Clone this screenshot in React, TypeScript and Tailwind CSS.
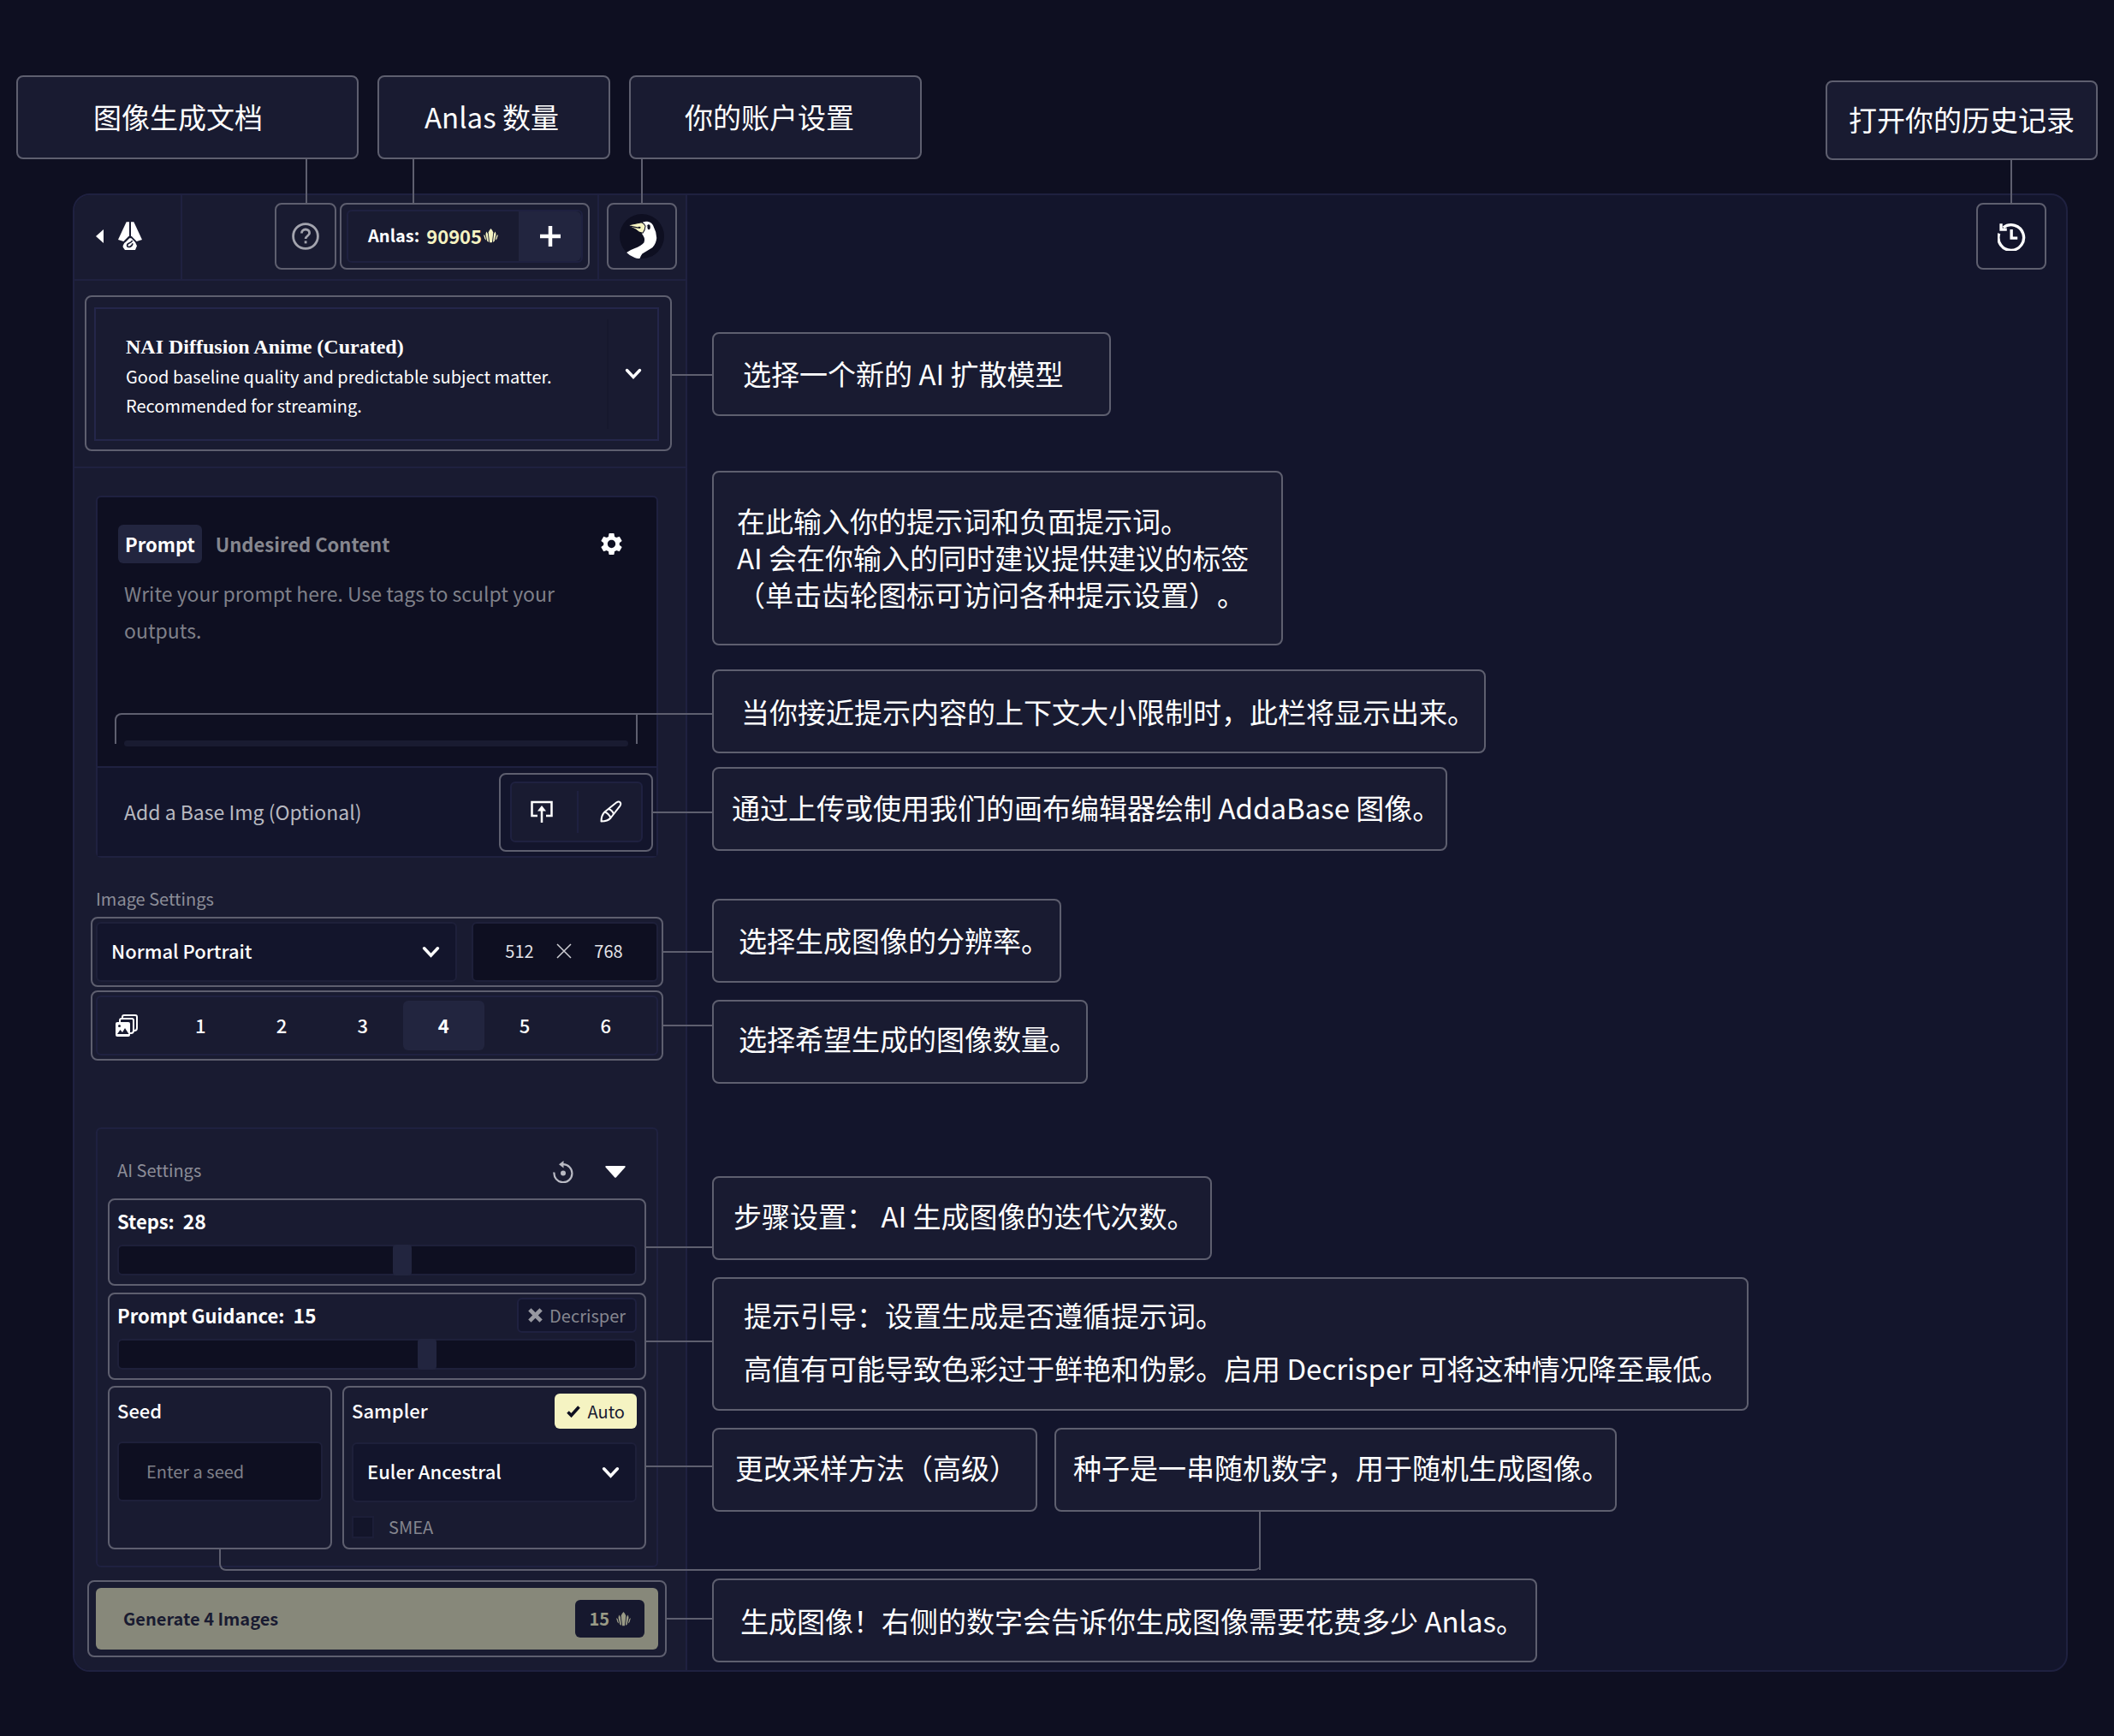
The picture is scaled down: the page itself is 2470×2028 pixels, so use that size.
import React from "react";
import { ReactNode } from "react";

/* ---------- icons ---------- */

const AnlasIcon = ({ className }: { className: string }) => (
  <svg viewBox="0 0 48 48" fill="currentColor" className={className} aria-hidden="true">
    <path d="M24 0q6 6 8 13l-4 33h-8l-4-33q2-7 8-13z" />
    <path d="M9 10l5 7 3 28-5-4-5-22z" />
    <path d="M39 10l-5 7-3 28 5-4 5-22z" />
    <path d="M0 20l5 4 4 15-5-5z" />
    <path d="M48 20l-5 4-4 15 5-5z" />
  </svg>
);

const PenNibLogo = () => (
  <svg viewBox="0 0 84 102" fill="#fff" className="h-[34px] w-[28px]" aria-hidden="true">
    <path d="M29 1h10v48L19 69 0 63z" />
    <path d="M45 1h10l29 62-19 6-20-20z" />
    <path d="M17 84q2-9 11-14l12-12h6l14 14 6 13-6 14H24l-7-10z" />
    <path d="M50 66q-3 6-11 9t-7 9 9 4 10-12" fill="none" stroke="#191b31" strokeWidth="5" />
  </svg>
);

const Chevron = ({ className }: { className: string }) => (
  <svg viewBox="0 0 20 14" fill="none" stroke="#fff" strokeWidth="3.4" className={className} aria-hidden="true">
    <path d="M2.5 2.5L10 10.5l7.5-8" strokeLinecap="round" />
  </svg>
);

const HelpIcon = () => (
  <svg viewBox="0 0 32 32" fill="none" stroke="#a3a4ae" strokeWidth="2.8" className="size-8" aria-hidden="true">
    <circle cx="16" cy="16" r="14.4" />
    <path d="M11.4 12.4c0-2.700 2-4.400 4.600-4.400s4.600 1.700 4.600 4.200c0 3.200-4.500 3.400-4.500 6.800" />
    <path d="M16.100 21.400v3" />
  </svg>
);

const Goose = () => (
  <svg viewBox="0 0 154 154" className="size-[52px]" aria-hidden="true">
    <circle cx="77" cy="77" r="77" fill="#0e0f21" />
    <path
      fill="#fff"
      d="M76 31q8-7 20-5 17 3 22 19 10 18 10 38-2 22-16 34-20 12-34 21-5 7-8 15-8 2-18-2-18-7-28-18 10-8 27-14 24-9 33-20 5-13-3-25-6-7-5-13z"
    />
    <path fill="#f5f3c2" stroke="#0e0f21" strokeWidth="3" d="M32 38l44-9q10 4 13 13-1 14-9 24l-12-3q-12-12-30-18z" />
    <path fill="none" stroke="#0e0f21" strokeWidth="4" d="M36 42l28 6" />
    <ellipse cx="68" cy="47" rx="5" ry="3" fill="#0e0f21" />
    <ellipse cx="101" cy="45" rx="5" ry="9" fill="#0e0f21" />
    <path d="M94 41l6-4" stroke="#0e0f21" strokeWidth="2" />
  </svg>
);

const HistoryIcon = () => (
  <svg viewBox="0 0 98 98" fill="none" stroke="#fff" strokeWidth="10" className="size-[33px]" aria-hidden="true">
    <path d="M5 38A44 44 0 1 0 20 17" />
    <path d="M12 4v20h20" />
    <path d="M48 24v30h21" />
  </svg>
);

const GearIcon = () => (
  <svg viewBox="0 0 24 24" fill="#fff" className="size-[31px]" aria-hidden="true">
    <path d="M19.140 12.940c.040-.300.060-.610.060-.940 0-.320-.020-.640-.070-.940l2.030-1.580a.490.490 0 0 0 .120-.610l-1.920-3.320a.488.488 0 0 0-.590-.220l-2.390.960c-.500-.380-1.030-.700-1.620-.940l-.360-2.540a.484.484 0 0 0-.480-.410h-3.840c-.240 0-.430.170-.470.410l-.360 2.540c-.590.240-1.130.570-1.620.940l-2.390-.960c-.220-.080-.470 0-.590.220L2.740 8.870c-.120.210-.080.470.120.610l2.030 1.580c-.050.300-.090.630-.090.940s.020.640.070.940l-2.030 1.580a.490.490 0 0 0-.120.610l1.920 3.320c.120.220.370.290.590.220l2.390-.960c.500.380 1.030.700 1.620.940l.360 2.540c.050.240.240.410.480.410h3.840c.240 0 .440-.170.470-.410l.360-2.540c.590-.240 1.130-.560 1.620-.940l2.390.960c.220.080.470 0 .590-.220l1.920-3.320c.120-.220.070-.470-.120-.610l-2.010-1.580zM12 15.600A3.610 3.610 0 0 1 8.400 12c0-1.980 1.620-3.600 3.600-3.600s3.600 1.620 3.600 3.600-1.620 3.600-3.600 3.600z" />
  </svg>
);

const UploadIcon = () => (
  <svg viewBox="0 0 26 26" fill="none" stroke="#fff" strokeWidth="2.500" className="size-[26px]" aria-hidden="true">
    <path d="M8 18H1.500V2h23v16H18" />
    <path d="M13 26V9" />
    <path d="M8 12.500L13 6l5 6.500z" fill="#fff" stroke="none" />
  </svg>
);

const BrushIcon = () => (
  <svg viewBox="0 0 26 26" fill="none" stroke="#fff" strokeWidth="2" className="size-[26px]" aria-hidden="true">
    <path d="M1.500 24.500C1.500 19 2.500 16.500 5.500 13.500L19.500 2.300q2.500-1.500 4 0t0 4L12.500 20.500c-2.500 3-5.500 4-11 4z" strokeLinejoin="round" />
    <path d="M5.500 13.500q5 2 7 7" />
    <path d="M10 10q4.500 1.500 6 6" />
  </svg>
);

const ImagesIcon = () => (
  <svg viewBox="0 0 26 26" fill="none" stroke="#fff" strokeWidth="2" className="size-[26px]" aria-hidden="true">
    <path d="M8 5V3q0-2 2-2h13q2 0 2 2v13q0 3-3 3h-1" />
    <path d="M5 9V7q0-2 2-2h12q2 0 2 2v12q0 3-3 3h-1" />
    <rect x="0" y="9" width="17" height="17" rx="2" fill="#fff" stroke="none" />
    <path d="M2 23l3.500-5 2.500 3 3-5 4.500 7z" fill="#191b31" stroke="none" />
    <circle cx="4.500" cy="13.500" r="1.500" fill="#191b31" stroke="none" />
  </svg>
);

const ResetIcon = () => (
  <svg viewBox="0 0 24 26" fill="none" stroke="#b9bac3" strokeWidth="2.200" className="h-[26px] w-6" aria-hidden="true">
    <path d="M1.500 13.500A10.500 10.500 0 1 0 12 4.200" />
    <path d="M12.500 0v8.400L7 4.200z" fill="#b9bac3" stroke="none" />
    <circle cx="12" cy="14.500" r="3" fill="#b9bac3" stroke="none" />
  </svg>
);

/* ---------- annotations ---------- */

const Callout = ({ className, children }: { className: string; children: ReactNode }) => (
  <div
    className={`relative flex flex-col justify-center rounded-lg border-2 border-[#5e5f6f] bg-[#191b31] text-[33px] leading-[43px] whitespace-nowrap text-white [text-spacing-trim:space-all] ${className}`}
  >
    {children}
  </div>
);

const LinkDown = ({ className }: { className: string }) => (
  <span className={`absolute top-full z-10 w-0.5 bg-[#5e5f6f] ${className}`} aria-hidden="true" />
);

const Outline = ({ className, link, children }: { className: string; link?: string; children: ReactNode }) => (
  <div className={`relative rounded-lg border-2 border-[#5e5f6f] ${className}`}>
    {children}
    {link && <span className={`absolute left-full z-10 h-0.5 bg-[#5e5f6f] ${link}`} aria-hidden="true" />}
  </div>
);

/* ---------- form pieces ---------- */

const Select = ({ id, label, value, className }: { id: string; label: string; value: string; className: string }) => (
  <div className={`relative ${className}`}>
    <select
      id={id}
      aria-label={label}
      defaultValue={value}
      className="h-[70px] w-full appearance-none rounded-md border-2 border-[#1e203a] bg-[#13152c] px-4 pb-1 text-[22px] font-medium text-white"
    >
      <option>{value}</option>
    </select>
    <Chevron className="pointer-events-none absolute top-7 right-5 h-[15px] w-[21px]" />
  </div>
);

const Slider = ({ id, min, max, value }: { id: string; min: number; max: number; value: number }) => (
  <input
    id={id}
    type="range"
    min={min}
    max={max}
    defaultValue={value}
    className="mt-[7px] block h-9 w-full appearance-none rounded-md border-2 border-[#1e203a] bg-[#0e0f21] [&::-webkit-slider-thumb]:h-9 [&::-webkit-slider-thumb]:w-[22px] [&::-webkit-slider-thumb]:appearance-none [&::-webkit-slider-thumb]:rounded-sm [&::-webkit-slider-thumb]:bg-[#22253f]"
  />
);

/* ---------- sidebar ---------- */

const SidebarHeader = () => (
  <header className="flex h-[100px] border-b-2 border-[#1f2140]">
    <button className="flex w-[126px] items-center gap-[17px] border-r-2 border-[#1f2140] pb-0.5 pl-[25px]" aria-label="Menu">
      <svg viewBox="0 0 9 16" fill="#fff" className="h-4 w-[9px]" aria-hidden="true">
        <path d="M9 0v16L0 8z" />
      </svg>
      <PenNibLogo />
    </button>
    <div className="ml-auto flex items-start pt-[9px]">
      <Outline className="mr-1 h-[78px] w-[72px]">
        <button className="flex size-full items-center justify-center" aria-label="Help">
          <HelpIcon />
        </button>
      </Outline>
      <Outline className="h-[78px] w-[292px] px-1.5 py-1.5">
        <div className="flex h-[62px] rounded-md border-2 border-[#1f2140]">
          <div className="flex flex-1 items-center pb-0.5 pl-[23px] text-[20px] font-semibold text-white">
            Anlas: <span className="ml-2 text-[22px] font-bold text-[#f5f3c2]">90905</span>
            <AnlasIcon className="ml-0.5 size-[17px] text-[#f5f3c2]" />
          </div>
          <button className="flex w-[73px] items-center justify-center rounded-r-md bg-[#22253f]" aria-label="Buy Anlas">
            <svg viewBox="0 0 24 24" stroke="#fff" strokeWidth="4.500" className="size-6" aria-hidden="true">
              <path d="M12 0v24M0 12h24" />
            </svg>
          </button>
        </div>
      </Outline>
      <div className="-mt-[9px] ml-[9px] h-[98px] w-0.5 bg-[#1f2140]" />
      <Outline className="mr-2.5 ml-[9px] h-[78px] w-[82px]">
        <button className="flex size-full items-center justify-center" aria-label="Account">
          <Goose />
        </button>
      </Outline>
    </div>
  </header>
);

const ModelPicker = () => (
  <section className="border-b-2 border-[#1f2140] pt-[17px] pr-4 pb-[18px] pl-3">
    <Outline className="pt-3 pr-[13px] pb-2.5 pl-[9px]" link="top-[90px] w-[49px]">
      <button className="flex h-[156px] w-full items-center border-2 border-[#24264a] text-left text-white">
        <span className="block flex-1 pt-1 pl-[35px] text-[20px] leading-[34px]">
          <span className="block font-['Liberation_Serif',serif] text-[24px] leading-[36px] font-bold">
            NAI Diffusion Anime (Curated)
          </span>
          Good baseline quality and predictable subject matter.
          <br />
          Recommended for streaming.
        </span>
        <span className="flex h-32 w-[59px] items-center justify-center border-l-2 border-[#16182d]">
          <Chevron className="h-[14px] w-5" />
        </span>
      </button>
    </Outline>
  </section>
);

const PromptPanel = () => (
  <section className="mt-8 mr-8 ml-[25px] rounded-md border-2 border-[#1f2140] bg-[#0e0f21]">
    <div className="flex items-center pt-8 pr-[37px] pl-6 text-[22px] leading-[45px] font-semibold">
      <button className="rounded-md bg-[#22253f] px-2 text-white">Prompt</button>
      <button className="ml-4 text-[#86878f]">Undesired Content</button>
      <button className="ml-auto" aria-label="Prompt settings">
        <GearIcon />
      </button>
    </div>
    <textarea
      aria-label="Prompt"
      placeholder="Write your prompt here. Use tags to sculpt your outputs."
      className="mt-3.5 block h-[153px] w-full resize-none bg-transparent pr-20 pl-[31px] text-[23px] leading-[43px] text-white outline-none placeholder:text-[#7f8089]"
    />
    <div className="relative mt-2 mr-[22px] mb-[26px] ml-5 h-9 rounded-tl-lg border-2 border-b-0 border-[#5e5f6f] px-[9px] pt-[30px]">
      <div className="h-[7px] rounded-full bg-[#191b31]" />
      <span className="absolute -top-0.5 left-full z-10 h-0.5 w-[89px] bg-[#5e5f6f]" aria-hidden="true" />
    </div>
    <div className="flex h-[105px] items-center justify-between border-t-2 border-[#1f2140] bg-[#13152c] pr-1 pl-[31px]">
      <span className="text-[23px] text-[#b8b9c0]">Add a Base Img (Optional)</span>
      <Outline className="h-[92px] w-[180px] pt-2 pr-2.5 pl-[11px]" link="top-[43px] w-[71px]">
        <div className="flex h-[71px] items-center rounded-md border-2 border-[#1f2140] bg-[#191b31]">
          <button className="flex flex-1 justify-center pr-1.5" aria-label="Upload image">
            <UploadIcon />
          </button>
          <span className="h-[49px] w-0.5 bg-[#1f2140]" />
          <button className="flex flex-1 justify-center pl-1" aria-label="Paint image">
            <BrushIcon />
          </button>
        </div>
      </Outline>
    </div>
  </section>
);

const ImageSettings = () => (
  <section className="mt-8 mr-[26px] ml-[19px]">
    <h2 className="pl-1.5 text-[20px] leading-8 text-[#8c8d98]">Image Settings</h2>
    <Outline className="mt-[5px] flex gap-[17px] p-1" link="top-[38px] w-[59px]">
      <Select id="resolution" label="Resolution" value="Normal Portrait" className="flex-1" />
      <div className="flex h-[70px] w-[218px] items-center rounded-md border-2 border-[#1e203a] bg-[#0e0f21] pr-[26px] pb-0.5 pl-[22px] text-[20px] text-[#e3e3e7]">
        <input aria-label="Width" defaultValue="512" className="w-16 bg-transparent text-center" />
        <svg viewBox="0 0 18 18" stroke="#d0d0d6" strokeWidth="1.500" className="mx-[11px] size-[18px] shrink-0" aria-hidden="true">
          <path d="M1 1l16 16M17 1L1 17" />
        </svg>
        <input aria-label="Height" defaultValue="768" className="w-16 bg-transparent text-center" />
      </div>
    </Outline>
    <Outline className="mt-1 p-1" link="top-[38px] w-[59px]">
      <div className="flex h-[70px] items-center rounded-md border-2 border-[#1f2140] pr-3 text-[22px] text-white">
        <span className="flex w-[73px] pl-[21px]">
          <ImagesIcon />
        </span>
        {[1, 2, 3, 4, 5, 6].map((n) => (
          <button key={n} className={n === 4 ? "h-[58px] flex-1 rounded-md bg-[#22253f] pb-0.5 font-bold" : "h-[58px] flex-1 pb-0.5 font-medium"}>
            {n}
          </button>
        ))}
      </div>
    </Outline>
  </section>
);

const AiSettings = () => (
  <section className="mt-[78px] mr-8 ml-[25px] rounded-md border-2 border-[#1f2140] px-3 pt-8 pb-[19px]">
    <div className="flex items-center pr-6 pl-[11px]">
      <h2 className="text-[20px] leading-8 text-[#8c8d98]">AI Settings</h2>
      <button className="ml-auto pt-1" aria-label="Reset settings">
        <ResetIcon />
      </button>
      <button className="ml-[37px] pt-1" aria-label="Collapse">
        <svg viewBox="0 0 24 14" fill="#fff" className="h-[14px] w-6" aria-hidden="true">
          <path d="M1.500 0h21q2 0 .8 1.700L13 13.300q-1 1-2 0L.7 1.700Q-.5 0 1.500 0z" />
        </svg>
      </button>
    </div>
    <Outline className="mt-[17px] px-[9px] pt-1 pb-2.5" link="top-[54px] w-[79px]">
      <label htmlFor="steps" className="flex h-[41px] items-center gap-2.5 text-[22px] font-semibold text-white">
        Steps: <b className="text-[23px] font-bold">28</b>
      </label>
      <Slider id="steps" min={1} max={50} value={28} />
    </Outline>
    <Outline className="mt-2 px-[9px] pt-1 pb-2.5" link="top-[54px] w-[79px]">
      <div className="flex items-center justify-between">
        <label htmlFor="guidance" className="flex h-[41px] items-center gap-2.5 text-[22px] font-semibold text-white">
          Prompt Guidance: <b className="text-[23px] font-bold">15</b>
        </label>
        <button className="flex h-[41px] items-center gap-2 rounded-md border-2 border-[#1f2140] bg-[#13152c] px-[11px] text-[20px] text-[#85868f]">
          <svg viewBox="0 0 18 18" stroke="#9798a0" strokeWidth="5" className="size-[17px]" aria-hidden="true">
            <path d="M2 2l14 14M16 2L2 16" />
          </svg>
          Decrisper
        </button>
      </div>
      <Slider id="guidance" min={0} max={25} value={15} />
    </Outline>
    <div className="mt-[7px] flex gap-3">
      <Outline className="w-[262px] px-[9px] pt-1.5">
        <label htmlFor="seed" className="block text-[22px] leading-10 font-medium text-white">
          Seed
        </label>
        <input
          id="seed"
          placeholder="Enter a seed"
          className="mt-[17px] block h-[70px] w-full rounded-md border-2 border-[#1e203a] bg-[#0e0f21] px-8 pb-0.5 text-[20px] text-white placeholder:text-[#7f8089]"
        />
        {/* runs beneath both columns and up to the seed note */}
        <span
          className="absolute top-full left-[128px] z-10 h-[27px] w-[1217px] rounded-b-lg border-b-2 border-l-2 border-[#5e5f6f]"
          aria-hidden="true"
        />
      </Outline>
      <Outline className="flex-1 px-[9px] pt-[7px] pb-[11px]" link="top-[91px] w-[79px]">
        <div className="flex items-center justify-between">
          <span className="pb-1 text-[22px] leading-9 font-medium text-white">Sampler</span>
          <button className="flex h-[41px] items-center gap-2 rounded-md bg-[#f5f3c2] px-3.5 text-[20px] text-[#191b31]">
            <svg viewBox="0 0 16 14" fill="none" stroke="#0e0f21" strokeWidth="3.600" className="h-[14px] w-4" aria-hidden="true">
              <path d="M1.500 7.500l4 4L14.500 1.500" />
            </svg>
            Auto
          </button>
        </div>
        <Select id="sampler" label="Sampler" value="Euler Ancestral" className="mt-4" />
        <label className="mt-4 flex h-[26px] items-center gap-[17px] text-[20px] text-[#85868f]">
          <input type="checkbox" className="size-[26px] appearance-none border-2 border-[#1c1e38] bg-[#13152a]" />
          SMEA
        </label>
      </Outline>
    </div>
  </section>
);

const GenerateButton = () => (
  <Outline className="mt-[15px] mr-[22px] mb-[15px] ml-[15px] px-2 py-[7px]" link="top-[42px] w-[55px]">
    <button className="flex h-[72px] w-full items-center justify-between rounded-md bg-[#87887a] pr-4 pl-8 text-[20px] font-bold text-[#191b31]">
      Generate 4 Images
      <span className="flex h-11 items-center gap-2 rounded-md bg-[#16182e] px-4 text-[#9a9b86]">
        15 <AnlasIcon className="size-[17px]" />
      </span>
    </button>
  </Outline>
);

/* ---------- page ---------- */

export default function App() {
  return (
    <div className="min-h-screen bg-[#0e0f21] pb-12 font-['Noto_Sans_CJK_SC',sans-serif]">
      <div className="flex items-start pt-[88px] pr-[19px] pl-[19px]">
        <Callout className="mr-[22px] h-[98px] w-[400px] pb-0.5 pl-[88px]">
          图像生成文档
          <LinkDown className="left-[336px] h-[53px]" />
        </Callout>
        <Callout className="mr-[22px] h-[98px] w-[272px] pb-0.5 pl-[53px]">
          Anlas 数量
          <LinkDown className="left-[39px] h-[53px]" />
        </Callout>
        <Callout className="h-[98px] w-[342px] pb-0.5 pl-[63px]">
          你的账户设置
          <LinkDown className="left-[12px] h-[53px]" />
        </Callout>
        <Callout className="mt-1.5 ml-auto h-[93px] w-[318px] pb-0.5 pl-[25px]">
          打开你的历史记录
          <LinkDown className="left-[214px] h-[52px]" />
        </Callout>
      </div>

      <div className="mt-[39px] mr-[54px] ml-[85px] flex rounded-[20px] border-2 border-[#1f2140] bg-[#13152c]">
        <aside className="w-[716px] shrink-0 rounded-l-[18px] border-r-2 border-[#1f2140] bg-[#191b31]">
          <SidebarHeader />
          <ModelPicker />
          <PromptPanel />
          <ImageSettings />
          <AiSettings />
          <GenerateButton />
        </aside>

        <main className="flex flex-1 flex-col items-start pl-[29px]">
          <div className="self-end pt-[9px] pr-[23px]">
            <Outline className="h-[78px] w-[82px]">
              <button className="flex size-full items-center justify-center" aria-label="History">
                <HistoryIcon />
              </button>
            </Outline>
          </div>
          <Callout className="mt-[73px] h-[98px] w-[466px] pb-0.5 pl-[34px]">选择一个新的 AI 扩散模型</Callout>
          <Callout className="mt-16 h-[204px] w-[667px] pb-0.5 pl-[27px]">
            <p>在此输入你的提示词和负面提示词。</p>
            <p>AI 会在你输入的同时建议提供建议的标签</p>
            <p>（单击齿轮图标可访问各种提示设置）。</p>
          </Callout>
          <Callout className="mt-7 h-[98px] w-[904px] pl-[32px]">当你接近提示内容的上下文大小限制时，此栏将显示出来。</Callout>
          <Callout className="mt-4 h-[98px] w-[859px] pb-1 pl-[21px]">通过上传或使用我们的画布编辑器绘制 AddaBase 图像。</Callout>
          <Callout className="mt-14 h-[98px] w-[408px] pb-0.5 pl-[29px]">选择生成图像的分辨率。</Callout>
          <Callout className="mt-5 h-[98px] w-[439px] pb-2 pl-[29px]">选择希望生成的图像数量。</Callout>
          <Callout className="mt-[108px] h-[98px] w-[584px] pb-1.5 pl-[23px]">步骤设置： AI 生成图像的迭代次数。</Callout>
          <Callout className="mt-5 h-[156px] w-[1211px] gap-[19px] pb-1.5 pl-[35px]">
            <p>提示引导：设置生成是否遵循提示词。</p>
            <p>高值有可能导致色彩过于鲜艳和伪影。启用 Decrisper 可将这种情况降至最低。</p>
          </Callout>
          <div className="mt-5 flex gap-5">
            <Callout className="h-[98px] w-[380px] pb-1.5 pl-[25px]">更改采样方法（高级）</Callout>
            <Callout className="h-[98px] w-[657px] pb-1.5 pl-[20px]">
              种子是一串随机数字，用于随机生成图像。
              <LinkDown className="left-[237px] h-[70px]" />
            </Callout>
          </div>
          <Callout className="mt-[78px] h-[98px] w-[964px] pl-[31px]">
            生成图像！右侧的数字会告诉你生成图像需要花费多少 Anlas。
          </Callout>
        </main>
      </div>
    </div>
  );
}
